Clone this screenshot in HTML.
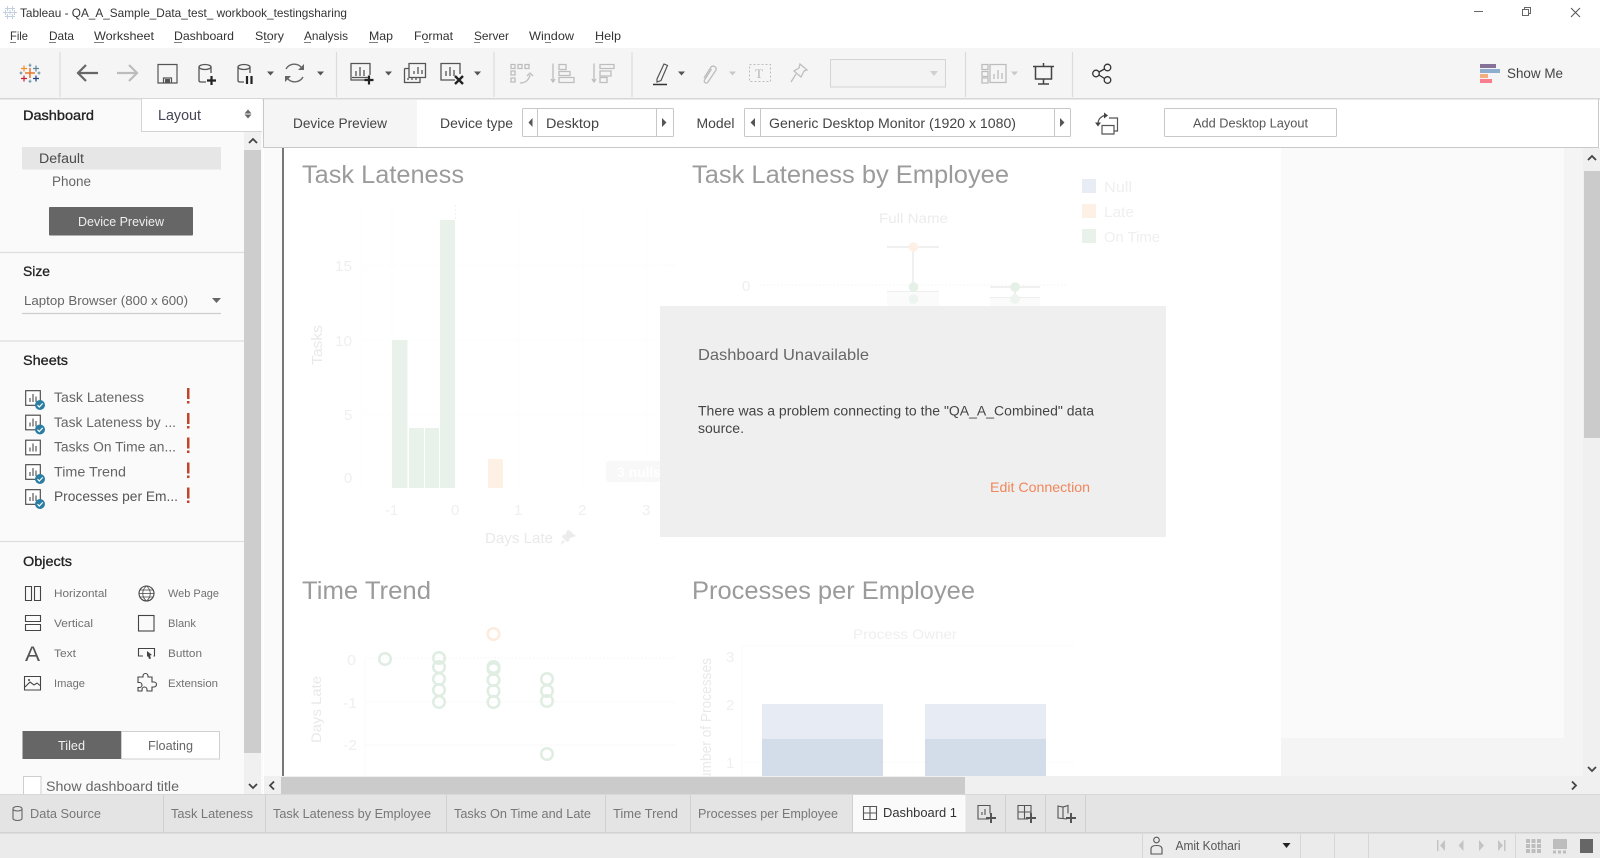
<!DOCTYPE html>
<html lang="en"><head><meta charset="utf-8"><title>Tableau</title>
<style>
html,body{margin:0;padding:0;background:#fff;overflow:hidden}
svg{display:block}
text{font-family:"Liberation Sans",sans-serif;white-space:pre}
.m{font-size:12px;fill:#333}
.p{font-size:13.5px;fill:#555}
.h{font-size:14px;fill:#222}
.o{font-size:11px;fill:#707070}
.t{font-size:12.5px;fill:#777}
.d{font-size:25px;fill:#9b9b9b}
.a{font-size:15px;fill:#efefef}
.l{font-size:15px;fill:#e9e9e9}
.ic{fill:none;stroke:#555;stroke-width:1.3}
.dis{fill:none;stroke:#bdbdbd;stroke-width:1.3}
</style></head><body>
<svg width="1600" height="858" viewBox="0 0 1600 858" xmlns="http://www.w3.org/2000/svg">
<defs>
<symbol id="sheet" viewBox="0 0 16 16" width="16" height="16"><path d="M.7.7h14.6v14.6H.7z" fill="#fff" stroke="#444" stroke-width="1.1"/><path d="M5 12V8M8 12V4M11 12V6.5" stroke="#666" stroke-width="1.3" fill="none"/></symbol>
<symbol id="check" viewBox="0 0 10 10" width="10" height="10"><circle cx="5" cy="5" r="5" fill="#2b7ea3"/><path d="M2.5 5.2l1.8 1.8 3.4-3.6" stroke="#fff" stroke-width="1.2" fill="none"/></symbol>
<symbol id="cross" viewBox="0 0 6 6" width="5" height="5"><path d="M3 0v6M0 3h6" stroke="currentColor" stroke-width="1.2"/></symbol>
</defs>

<!-- base -->
<rect width="1600" height="858" fill="#fff"/>

<!-- title bar -->
<g color="#c3cfdd"><use href="#cross" x="5" y="6"/><use href="#cross" x="10" y="6"/><use href="#cross" x="3" y="10"/><use href="#cross" x="7.500" y="10"/><use href="#cross" x="12" y="10"/><use href="#cross" x="5" y="14"/><use href="#cross" x="10" y="14"/></g>
<text x="20" y="17" class="m" textLength="327" lengthAdjust="spacingAndGlyphs">Tableau - QA_A_Sample_Data_test_ workbook_testingsharing</text>
<path d="M1474 11.5h9" stroke="#666"/><path d="M1522.5 9.5h6v6h-6zM1524.5 9.5v-2h6v6h-2" fill="none" stroke="#666"/><path d="M1571 8l9 9M1580 8l-9 9" stroke="#555"/>

<!-- menu -->
<g class="m">
<text x="10" y="40" class="m" textLength="18" lengthAdjust="spacingAndGlyphs">File</text>
<text x="49" y="40" class="m" textLength="25" lengthAdjust="spacingAndGlyphs">Data</text>
<text x="94" y="40" class="m" textLength="60" lengthAdjust="spacingAndGlyphs">Worksheet</text>
<text x="174" y="40" class="m" textLength="60" lengthAdjust="spacingAndGlyphs">Dashboard</text>
<text x="255" y="40" class="m" textLength="29" lengthAdjust="spacingAndGlyphs">Story</text>
<text x="304" y="40" class="m" textLength="44" lengthAdjust="spacingAndGlyphs">Analysis</text>
<text x="369" y="40" class="m" textLength="24" lengthAdjust="spacingAndGlyphs">Map</text>
<text x="414" y="40" class="m" textLength="39" lengthAdjust="spacingAndGlyphs">Format</text>
<text x="474" y="40" class="m" textLength="35" lengthAdjust="spacingAndGlyphs">Server</text>
<text x="529" y="40" class="m" textLength="45" lengthAdjust="spacingAndGlyphs">Window</text>
<text x="595" y="40" class="m" textLength="26" lengthAdjust="spacingAndGlyphs">Help</text>
</g>
<path d="M10 42.5h6M49 42.5h7M94 42.5h10M174 42.5h8M264 42.5h6M304 42.5h7M369 42.5h9M424 42.5h5M474 42.5h6M545 42.5h6M595 42.5h8" stroke="#555" stroke-width=".8"/>

<!-- toolbar -->
<rect y="48" width="1600" height="50" fill="#f5f5f5"/>
<rect y="98" width="1600" height="1.5" fill="#d6d6d6"/>
<path d="M60 52v45M336.500 52v45M494 52v45M632 52v45M965.500 52v45M1072.500 52v45" stroke="#dcdcdc" stroke-width="1.2"/>
<!-- logo -->
<g>
<path d="M30 68v10M25 73h10" stroke="#e8762b" stroke-width="1.500"/>
<path d="M24 65.500v6M21 68.500h6" stroke="#f28e2b" stroke-width="1.200"/>
<path d="M36 65.500v6M33 68.500h6" stroke="#5b879b" stroke-width="1.200"/>
<path d="M24 75.500v6M21 78.500h6" stroke="#c72035" stroke-width="1.200"/>
<path d="M36 75.500v6M33 78.500h6" stroke="#1f447e" stroke-width="1.200"/>
<path d="M30 63.500v3.500M28.500 65.200h3M30 79.500v3.500M28.500 81.200h3M21 71.500v3M19.500 73h3M39 71.500v3M37.500 73h3" stroke="#5b879b" stroke-width=".9"/>
</g>
<!-- back/forward -->
<path d="M98 73H78M86 65l-8 8 8 8" fill="none" stroke="#666" stroke-width="2.2"/>
<path d="M117 73h20M129 65l8 8-8 8" fill="none" stroke="#bcbcbc" stroke-width="2.2"/>
<!-- save -->
<path d="M158 64.500h19v18.500h-19zM163.500 83v-5h8v5" fill="none" stroke="#555" stroke-width="1.2"/>
<path d="M165 79h5v4h-5z" fill="#555"/>
<!-- data add -->
<ellipse cx="205" cy="67" rx="6" ry="2.500" class="ic"/><path d="M199 67v13.500q0 1.500 2 1.500h5M211 67v6" class="ic"/>
<path d="M211.500 76v9M207 80.500h9" stroke="#222" stroke-width="2.200"/>
<!-- data pause -->
<ellipse cx="244" cy="67" rx="6" ry="2.500" class="ic"/><path d="M238 67v13.500q0 1.500 2 1.500h4M250 67v6" class="ic"/>
<path d="M247 76v8M251.500 76v8" stroke="#222" stroke-width="2.200"/>
<path d="M267 71.500h7l-3.500 4z" fill="#555"/>
<!-- refresh -->
<path d="M286 69a9.500 9.500 0 0 1 15.500-1.500M303 77a9.500 9.500 0 0 1-15.500 1.500" fill="none" stroke="#666" stroke-width="1.400"/>
<path d="M304 64v6h-6zM285 82v-6h6z" fill="#666"/>
<path d="M317 71.500h7l-3.500 4z" fill="#555"/>
<!-- new sheet -->
<path d="M367 80h-16V63.500h19V75" class="ic"/><path d="M356 76v-5M360 76v-9M364 76v-6" class="ic"/><path d="M352 77.500h16" class="ic"/>
<path d="M369 75.500v9M364.500 80h9" stroke="#222" stroke-width="2.200"/>
<path d="M385 71.500h7l-3.500 4z" fill="#555"/>
<!-- duplicate -->
<path d="M409 63.500h16.500v14H409zM404.500 68.500h4.500M404.500 68.500v14h15.500v-5" class="ic"/><path d="M414 74v-3M418 74v-7M422 74v-4M408 80v-2M412 80v-2M416 80v-2" class="ic"/>
<!-- clear -->
<path d="M455 80h-14V63.500h19V74" class="ic"/><path d="M446 76v-5M450 76v-9M454 76v-6" class="ic"/>
<path d="M455 76l8 8M463 76l-8 8" stroke="#222" stroke-width="2.400"/>
<path d="M474 71.500h7l-3.500 4z" fill="#555"/>
<!-- disabled swap -->
<path d="M511 64.500h4v4h-4zM518 64.500h4v4h-4zM525 64.500h4v4h-4zM511 71h4v4h-4zM511 78h4v4h-4z" class="dis"/><path d="M520 83q8 0 10-8M533 76l-3-3-3 3" class="dis"/>
<!-- sort -->
<path d="M553 63.500v18M551 79l2 3 2-3M559 64.500h7v5h-7zM559 71.500h11v4h-11zM559 77.500h15v5h-15z" class="dis"/>
<path d="M594 63.500v18M592 79l2 3 2-3M600 64.500h14v4h-14zM600 71h11v5h-11zM600 77.500h7v5h-7z" class="dis"/>
<!-- highlight -->
<path d="M657 79l7-15 3.500 1.500-6.500 15-4 1.500z" fill="none" stroke="#555" stroke-width="1.200"/><path d="M653 84.500h14" stroke="#333" stroke-width="1.500"/>
<path d="M678 71.500h7l-3.500 4z" fill="#555"/>
<!-- clip -->
<path d="M704 78l7-11a3 3 0 0 1 5 3l-8 12a2 2 0 0 1-3.500-2l7-11" fill="none" stroke="#bdbdbd" stroke-width="1.300"/>
<path d="M729 71.500h7l-3.500 4z" fill="#c8c8c8"/>
<!-- T -->
<path d="M749.500 64.500h21v17h-21z" fill="none" stroke="#bdbdbd" stroke-dasharray="2 2"/>
<text x="755" y="78" font-size="13" fill="#b5b5b5" style="font-family:'Liberation Serif',serif">T</text>
<!-- pin -->
<path d="M800 64l7 6-3 1-3 6-7-6 5-3zM796 74l-5 8" class="dis"/>
<!-- dropdown -->
<rect x="830.500" y="59.500" width="115" height="27.500" fill="#f3f3f3" stroke="#d4d4d4"/>
<path d="M930 71h8l-4 5z" fill="#d0d0d0"/>
<!-- fit -->
<path d="M982 64.500h6v5h-6zM982 71.500h6v5h-6zM982 78h6v5h-6zM990 64.500h16v18h-16zM994 79v-5M998 79v-9M1002 79v-6" class="dis"/>
<path d="M1011 71.500h7l-3.500 4z" fill="#c8c8c8"/>
<!-- presentation -->
<path d="M1033 66.500h21M1035.500 67v12h16V67M1043.500 79v5M1038 84h11M1043.500 63v3" fill="none" stroke="#444" stroke-width="1.500"/>
<!-- share -->
<circle cx="1107.500" cy="67.500" r="3.300" class="ic" style="stroke:#333"/><circle cx="1096" cy="73.500" r="3.300" class="ic" style="stroke:#333"/><circle cx="1107.500" cy="80" r="3.300" class="ic" style="stroke:#333"/><path d="M1099 72l5.500-3M1099 75l5.500 3.500" class="ic" style="stroke:#333"/>
<!-- show me -->
<rect x="1480" y="64" width="16" height="4" fill="#857299"/><rect x="1480" y="69" width="20" height="4" fill="#8eaed0"/><rect x="1480" y="74" width="8" height="4" fill="#f4ad7f"/><rect x="1480" y="79" width="12" height="4" fill="#f87e8e"/>
<text x="1507" y="78" font-size="14" fill="#444" textLength="56" lengthAdjust="spacingAndGlyphs">Show Me</text>

<!-- dashboard region -->
<rect x="264" y="148" width="1336" height="630" fill="#fff"/>
<rect x="264" y="148" width="18" height="630" fill="#fafafa"/>
<rect x="282" y="148" width="2" height="630" fill="#777"/>
<rect x="1281" y="148" width="283" height="590" fill="#fafafa"/>
<rect x="1281" y="738" width="283" height="38" fill="#f4f4f4"/>
<rect x="1564" y="148" width="19" height="628" fill="#f4f4f4"/>

<!-- Task Lateness chart -->
<text x="302" y="183" class="d" textLength="162" lengthAdjust="spacingAndGlyphs">Task Lateness</text>
<path d="M362 265H660M362 340H660M362 414H660M362 205V488M392 205V488M518 205V488M583 205V488M646 205V488" stroke="#fcfcfc"/>
<path d="M455.500 205V220" stroke="#f2f2f2" stroke-dasharray="2 2"/>
<rect x="392" y="340" width="15.500" height="148" fill="#e9f2ea"/>
<rect x="409" y="428" width="15" height="60" fill="#e9f2ea"/>
<rect x="425" y="428" width="14" height="60" fill="#e9f2ea"/>
<rect x="440" y="220" width="15" height="268" fill="#e9f2ea"/>
<rect x="488" y="459" width="15" height="29" fill="#fdf1e6"/>
<text x="335" y="271" class="a" textLength="17" lengthAdjust="spacingAndGlyphs">15</text>
<text x="335" y="346" class="a" textLength="17" lengthAdjust="spacingAndGlyphs">10</text>
<text x="344" y="420" class="a">5</text>
<text x="344" y="483" class="a">0</text>
<text x="385" y="515" class="a" textLength="13" lengthAdjust="spacingAndGlyphs">-1</text>
<text x="451" y="515" class="a">0</text>
<text x="514" y="515" class="a">1</text>
<text x="578" y="515" class="a">2</text>
<text x="642" y="515" class="a">3</text>
<text transform="translate(322,365) rotate(-90)" class="l" textLength="40" lengthAdjust="spacingAndGlyphs">Tasks</text>
<text x="485" y="543" class="l" textLength="68" lengthAdjust="spacingAndGlyphs">Days Late</text>
<path d="M569 530l7 6-2.500 1-3.500 1-1 3-2 1-5-5 1-2 3-1 1-3.500zM563 540l-3 5 5-3z" fill="#ececec"/>
<rect x="606" y="461" width="60" height="21" rx="3" fill="#f8f8f8"/>
<text x="617" y="477" font-size="14" font-weight="bold" fill="#fff" textLength="44" lengthAdjust="spacingAndGlyphs">3 nulls</text>

<!-- Employee chart -->
<text x="692" y="183" class="d" textLength="317" lengthAdjust="spacingAndGlyphs">Task Lateness by Employee</text>
<rect x="1082" y="179" width="14" height="14" fill="#e8ecf4"/><rect x="1082" y="204" width="14" height="14" fill="#fdf1e6"/><rect x="1082" y="229" width="14" height="14" fill="#e9f2ea"/>
<text x="1104" y="192" class="a" textLength="28" lengthAdjust="spacingAndGlyphs">Null</text>
<text x="1104" y="217" class="a" textLength="30" lengthAdjust="spacingAndGlyphs">Late</text>
<text x="1104" y="242" class="a" textLength="56" lengthAdjust="spacingAndGlyphs">On Time</text>
<text x="879" y="223" font-size="14" fill="#ececec" textLength="69" lengthAdjust="spacingAndGlyphs">Full Name</text>
<text x="742" y="291" class="a">0</text>
<path d="M660 265h16" stroke="#fbfbfb"/>
<path d="M760 285H1066" stroke="#f3f3f3" stroke-dasharray="1.500 2"/>
<path d="M887 247h52M913 247v45M990 287h50M1015 287v13" stroke="#eeeeee" stroke-width="1.800"/>
<path d="M887 291.500h52M990 297.500h50" stroke="#eeeeee"/>
<rect x="887" y="292" width="52" height="14" fill="#fbfbfb"/><rect x="990" y="298" width="50" height="8" fill="#fbfbfb"/>
<circle cx="913.500" cy="247" r="4.800" fill="#fdf1e6"/><circle cx="913.500" cy="287" r="4.800" fill="#e5f0e6"/><circle cx="913.500" cy="299" r="4.800" fill="#eef4ef"/><circle cx="1015" cy="287" r="4.800" fill="#e5f0e6"/><circle cx="1015" cy="299" r="4.800" fill="#eef4ef"/>

<!-- Dialog -->
<rect x="660" y="306" width="506" height="231" fill="#efefef"/>
<text x="698" y="360" font-size="16" fill="#666" textLength="171" lengthAdjust="spacingAndGlyphs">Dashboard Unavailable</text>
<text x="698" y="415.500" font-size="13.500" fill="#444" textLength="396" lengthAdjust="spacingAndGlyphs">There was a problem connecting to the "QA_A_Combined" data</text>
<text x="698" y="433" font-size="13.500" fill="#444" textLength="46" lengthAdjust="spacingAndGlyphs">source.</text>
<text x="990" y="492" font-size="14" fill="#f0865c" textLength="100" lengthAdjust="spacingAndGlyphs">Edit Connection</text>

<!-- Time Trend -->
<text x="302" y="599" class="d" textLength="129" lengthAdjust="spacingAndGlyphs">Time Trend</text>
<path d="M365 702H675M365 745H675M365 660V776" stroke="#fafafa"/>
<path d="M365 658H675" stroke="#f3f3f3" stroke-dasharray="1.500 2"/>
<text x="347" y="665" class="a" textLength="9" lengthAdjust="spacingAndGlyphs">0</text>
<text x="343" y="708" class="a" textLength="14" lengthAdjust="spacingAndGlyphs">-1</text>
<text x="343" y="750" class="a" textLength="14" lengthAdjust="spacingAndGlyphs">-2</text>
<text transform="translate(321,743) rotate(-90)" font-size="14" fill="#e9e9e9" textLength="67" lengthAdjust="spacingAndGlyphs">Days Late</text>
<g fill="none" stroke="#e0ede2" stroke-width="2.500">
<circle cx="385" cy="659" r="5.800"/>
<circle cx="439" cy="658" r="5.800"/><circle cx="439" cy="667" r="5.800"/><circle cx="439" cy="679" r="5.800"/><circle cx="439" cy="690" r="5.800"/><circle cx="439" cy="702" r="5.800"/>
<circle cx="493.500" cy="667" r="5.800"/><circle cx="493.500" cy="669" r="5.800"/><circle cx="493.500" cy="680" r="5.800"/><circle cx="493.500" cy="691" r="5.800"/><circle cx="493.500" cy="702" r="5.800"/>
<circle cx="547" cy="679" r="5.800"/><circle cx="547" cy="691" r="5.800"/><circle cx="547" cy="701" r="5.800"/><circle cx="547" cy="754" r="5.800"/>
</g>
<circle cx="493.500" cy="634" r="5.800" fill="none" stroke="#fdebdd" stroke-width="2.500"/>

<!-- Processes -->
<text x="692" y="599" class="d" textLength="283" lengthAdjust="spacingAndGlyphs">Processes per Employee</text>
<text x="853" y="639" font-size="14" fill="#efefef" textLength="104" lengthAdjust="spacingAndGlyphs">Process Owner</text>
<path d="M742 646H1075M742 762H1075M742 646V776" stroke="#fbfbfb"/>
<text x="726" y="662" class="a">3</text><text x="726" y="710" class="a">2</text><text x="726" y="768" class="a">1</text>
<text transform="translate(711,790) rotate(-90)" font-size="15" fill="#e9e9e9" textLength="132" lengthAdjust="spacingAndGlyphs">Number of Processes</text>
<rect x="762" y="704" width="121" height="35" fill="#e7ecf4"/><rect x="762" y="739" width="121" height="38" fill="#d3dde9"/>
<rect x="925" y="704" width="121" height="35" fill="#e7ecf4"/><rect x="925" y="739" width="121" height="38" fill="#d3dde9"/>

<!-- right scrollbar -->
<rect x="1583" y="148" width="17" height="628" fill="#f0f0f0"/>
<rect x="1584" y="171" width="16" height="267" fill="#cbcbcb"/>
<path d="M1588 160l4-4 4 4M1588 767l4 4 4-4" fill="none" stroke="#444" stroke-width="1.800"/>
<!-- h scrollbar -->
<rect x="264" y="776" width="1336" height="18" fill="#f0f0f0"/>
<rect x="281" y="777" width="684" height="17" fill="#cbcbcb"/>
<path d="M274 781.500l-4 4 4 4M1572 781.500l4 4-4 4" fill="none" stroke="#444" stroke-width="1.800"/>

<!-- device preview bar -->
<rect x="263" y="99.500" width="1335.500" height="48" fill="#fff"/>
<path d="M263 147.500H1599M1598.500 99V148M263.500 99V148" stroke="#c9c9c9" fill="none"/>
<rect x="264" y="100" width="153" height="47" fill="#f5f5f5"/>
<text x="293" y="128" class="h" style="fill:#444" textLength="94" lengthAdjust="spacingAndGlyphs">Device Preview</text>
<text x="440" y="128" class="h" style="fill:#444" textLength="73" lengthAdjust="spacingAndGlyphs">Device type</text>
<rect x="522.500" y="108.500" width="151" height="28" rx="1" fill="#fff" stroke="#c8c8c8"/>
<path d="M537.500 108.500v28M656.500 108.500v28" stroke="#c8c8c8"/>
<path d="M532.500 118v9l-4-4.500zM662 118v9l4.500-4.500z" fill="#555"/>
<text x="546" y="128" class="h" style="fill:#444" textLength="53" lengthAdjust="spacingAndGlyphs">Desktop</text>
<text x="696.500" y="128" class="h" style="fill:#444" textLength="38" lengthAdjust="spacingAndGlyphs">Model</text>
<rect x="744.500" y="108.500" width="326" height="28" rx="1" fill="#fff" stroke="#c8c8c8"/>
<path d="M760.500 108.500v28M1054.500 108.500v28" stroke="#c8c8c8"/>
<path d="M755 118v9l-4.500-4.500zM1060 118v9l4.500-4.500z" fill="#555"/>
<text x="769" y="128" class="h" style="fill:#444" textLength="247" lengthAdjust="spacingAndGlyphs">Generic Desktop Monitor (1920 x 1080)</text>
<!-- rotate icon -->
<path d="M1102 125.500h12v8.500h-12zM1109 118h8.500v13h-3.500M1098 124q0-7 8-9" fill="none" stroke="#555" stroke-width="1.200"/>
<path d="M1095 122.500h6l-3 4zM1104 112.500l4 3-4 3z" fill="#444"/>
<rect x="1164.500" y="108.500" width="172" height="28" rx="1" fill="#fff" stroke="#c8c8c8"/>
<text x="1193" y="127.500" font-size="13" fill="#555" textLength="115" lengthAdjust="spacingAndGlyphs">Add Desktop Layout</text>

<!-- left panel -->
<rect x="0" y="99.500" width="263" height="695" fill="#fafafa"/>
<rect x="141" y="99" width="121" height="32.500" fill="#fff"/>
<path d="M141.500 99v32.500H262" stroke="#d4d4d4" fill="none"/>
<text x="23" y="120" font-size="14" fill="#222" stroke="#222" stroke-width=".35" textLength="71" lengthAdjust="spacingAndGlyphs">Dashboard</text>
<text x="158" y="120" font-size="14.500" fill="#445" textLength="43" lengthAdjust="spacingAndGlyphs">Layout</text>
<path d="M248 109.500l-3.500 4h7zM248 118.500l-3.500-4h7z" fill="#666"/>
<!-- left scrollbar -->
<rect x="244" y="132" width="17" height="662" fill="#f0f0f0"/>
<rect x="244" y="150" width="17" height="603" fill="#cdcdcd"/>
<path d="M249 143l4-4 4 4M249 784l4 4 4-4" fill="none" stroke="#444" stroke-width="1.800"/>

<rect x="22" y="147" width="199" height="22.500" fill="#e6e6e6"/>
<text x="39" y="163" class="p" style="fill:#4a4a4a" textLength="45" lengthAdjust="spacingAndGlyphs">Default</text>
<text x="52" y="186" class="p" style="fill:#666" textLength="39" lengthAdjust="spacingAndGlyphs">Phone</text>
<rect x="49" y="207" width="144" height="28.500" rx="1" fill="#666"/>
<text x="78" y="226" font-size="12.500" fill="#efefef" textLength="86" lengthAdjust="spacingAndGlyphs">Device Preview</text>
<path d="M0 252.500h244M0 341h244M0 541.500h244" stroke="#dedede" stroke-width="1.200"/>
<text x="23" y="276" font-size="14" fill="#222" stroke="#222" stroke-width=".3" textLength="27" lengthAdjust="spacingAndGlyphs">Size</text>
<text x="24" y="305" class="t" style="fill:#666" textLength="164" lengthAdjust="spacingAndGlyphs">Laptop Browser (800 x 600)</text>
<path d="M212 298h9l-4.500 5z" fill="#666"/>
<path d="M22 313.500h199" stroke="#cfcfcf" stroke-width="1.200"/>
<text x="23" y="365" font-size="14" fill="#222" stroke="#222" stroke-width=".3" textLength="45" lengthAdjust="spacingAndGlyphs">Sheets</text>
<use href="#sheet" x="25" y="390"/><use href="#check" x="35" y="400"/>
<use href="#sheet" x="25" y="414.500"/><use href="#check" x="35" y="424.500"/>
<use href="#sheet" x="25" y="439.500"/>
<use href="#sheet" x="25" y="464"/><use href="#check" x="35" y="474"/>
<use href="#sheet" x="25" y="489"/><use href="#check" x="35" y="499"/>
<text x="54" y="402" class="p" style="fill:#666" textLength="90" lengthAdjust="spacingAndGlyphs">Task Lateness</text>
<text x="54" y="427" class="p" style="fill:#666" textLength="122" lengthAdjust="spacingAndGlyphs">Task Lateness by ...</text>
<text x="54" y="451.500" class="p" style="fill:#666" textLength="122" lengthAdjust="spacingAndGlyphs">Tasks On Time an...</text>
<text x="54" y="476.500" class="p" style="fill:#666" textLength="72" lengthAdjust="spacingAndGlyphs">Time Trend</text>
<text x="54" y="501" class="p" style="fill:#555" textLength="124" lengthAdjust="spacingAndGlyphs">Processes per Em...</text>
<g fill="#c4442a"><rect x="187" y="388" width="2.500" height="11"/><rect x="187" y="401" width="2.500" height="2.500"/><rect x="187" y="413" width="2.500" height="11"/><rect x="187" y="426" width="2.500" height="2.500"/><rect x="187" y="437.500" width="2.500" height="11"/><rect x="187" y="450.500" width="2.500" height="2.500"/><rect x="187" y="462.500" width="2.500" height="11"/><rect x="187" y="475.500" width="2.500" height="2.500"/><rect x="187" y="487.500" width="2.500" height="11"/><rect x="187" y="500.500" width="2.500" height="2.500"/></g>

<text x="23" y="566" font-size="14" fill="#222" stroke="#222" stroke-width=".3" textLength="49" lengthAdjust="spacingAndGlyphs">Objects</text>
<!-- object icons -->
<path d="M25.500 586.500h6v14h-6zM34.500 586.500h6v14h-6zM25.500 615.500h15v6h-15zM25.500 624.500h15v6h-15z" fill="none" stroke="#444" stroke-width="1.100"/>
<text x="25" y="661" font-size="21" fill="#555" textLength="15" lengthAdjust="spacingAndGlyphs">A</text>
<path d="M24.500 676.500h16v13.500h-16zM25 687l5-5 4 3 3-2 3 2.500" fill="none" stroke="#444" stroke-width="1.100"/><circle cx="29" cy="680" r="1" fill="#444"/>
<circle cx="146.500" cy="593.500" r="7.500" fill="none" stroke="#444" stroke-width="1.100"/><path d="M139 593.500h15M146.500 586c-5 4-5 11 0 15M146.500 586c5 4 5 11 0 15M140 590h13M140 597h13" fill="none" stroke="#444" stroke-width=".8"/>
<rect x="138.500" y="615.500" width="15.500" height="15.500" fill="none" stroke="#444" stroke-width="1.100"/>
<path d="M143 656h-4.500v-7.500h16V656h-1" fill="none" stroke="#444" stroke-width="1.100"/><path d="M147 651l5 4-2 .5 1 3-2 .5-1-3-1 1z" fill="#444"/>
<path d="M143 677v-1a2.500 2.500 0 0 1 5 0v1h4v5h2a2.500 2.500 0 0 1 0 5h-2v4h-5v-1.500a2.500 2.500 0 0 0-5 0V691h-4v-3.500h1.500a2.500 2.500 0 0 0 0-5H138v-5.500z" fill="none" stroke="#444" stroke-width="1.100"/>
<text x="54" y="597" class="o" textLength="53" lengthAdjust="spacingAndGlyphs">Horizontal</text>
<text x="54" y="627" class="o" textLength="39" lengthAdjust="spacingAndGlyphs">Vertical</text>
<text x="54" y="657" class="o" textLength="22" lengthAdjust="spacingAndGlyphs">Text</text>
<text x="54" y="687" class="o" textLength="31" lengthAdjust="spacingAndGlyphs">Image</text>
<text x="168" y="597" class="o" textLength="51" lengthAdjust="spacingAndGlyphs">Web Page</text>
<text x="168" y="627" class="o" textLength="28" lengthAdjust="spacingAndGlyphs">Blank</text>
<text x="168" y="657" class="o" textLength="34" lengthAdjust="spacingAndGlyphs">Button</text>
<text x="168" y="687" class="o" textLength="50" lengthAdjust="spacingAndGlyphs">Extension</text>
<rect x="22.500" y="731" width="99" height="28" fill="#666"/>
<rect x="121.500" y="731.500" width="98" height="27.500" fill="#fff" stroke="#d0d0d0"/>
<text x="58" y="750" font-size="13" fill="#f0f0f0" textLength="27" lengthAdjust="spacingAndGlyphs">Tiled</text>
<text x="148" y="750" font-size="13" fill="#666" textLength="45" lengthAdjust="spacingAndGlyphs">Floating</text>
<rect x="23.500" y="776.500" width="17.500" height="18" fill="#fff" stroke="#cfcfcf"/>
<text x="46" y="791" class="p" style="fill:#666" textLength="133" lengthAdjust="spacingAndGlyphs">Show dashboard title</text>

<!-- tab bar -->
<rect y="794" width="1600" height="38" fill="#e4e4e4"/>
<rect y="794" width="1600" height="1" fill="#d8d8d8"/>
<rect y="832" width="1600" height="1.500" fill="#d2d2d2"/>
<rect y="833.500" width="1600" height="24.500" fill="#ebebeb"/>
<path d="M163.500 795v37M265.500 795v37M446.500 795v37M605.500 795v37M690.500 795v37M852.500 795v37M1005.500 795v37M1045.500 795v37M1085.500 795v37" stroke="#d0d0d0"/>
<rect x="853" y="795" width="112.500" height="37" fill="#fafafa"/>
<path d="M13 808.500a4.500 2 0 0 1 9 0v10a4.500 2 0 0 1-9 0zM13 809a4.500 2 0 0 0 9 0" fill="none" stroke="#666" stroke-width="1.100"/>
<text x="30" y="818" class="t" textLength="71" lengthAdjust="spacingAndGlyphs">Data Source</text>
<text x="171" y="818" class="t" textLength="82" lengthAdjust="spacingAndGlyphs">Task Lateness</text>
<text x="273" y="818" class="t" textLength="158" lengthAdjust="spacingAndGlyphs">Task Lateness by Employee</text>
<text x="454" y="818" class="t" textLength="137" lengthAdjust="spacingAndGlyphs">Tasks On Time and Late</text>
<text x="613" y="818" class="t" textLength="65" lengthAdjust="spacingAndGlyphs">Time Trend</text>
<text x="698" y="818" class="t" textLength="140" lengthAdjust="spacingAndGlyphs">Processes per Employee</text>
<path d="M863.500 806.500h13v13h-13zM870 806.500v13M863.500 813h13" fill="none" stroke="#555" stroke-width="1.100"/>
<text x="883" y="817" font-size="13" fill="#333" textLength="74" lengthAdjust="spacingAndGlyphs">Dashboard 1</text>
<!-- new sheet tabs -->
<path d="M989 819h-11v-13.500h12v8M982 815v-3M985 815v-6" fill="none" stroke="#555" stroke-width="1.100"/><path d="M991 813v10M986 818h10" stroke="#555" stroke-width="2"/>
<path d="M1028 819h-10v-13.500h13v8M1024.500 805.500v13.500M1018 812h13" fill="none" stroke="#555" stroke-width="1.100"/><path d="M1031 813v10M1026 818h10" stroke="#555" stroke-width="2"/>
<path d="M1067 819l-9-1v-12l5 1 5-1.500v8M1063 807v12" fill="none" stroke="#555" stroke-width="1.100"/><path d="M1071 813v10M1066 818h10" stroke="#555" stroke-width="2"/>

<!-- status bar -->
<path d="M1142.500 834v24M1300.500 834v24M1334.500 834v24M1368.500 834v24M1515.500 834v24" stroke="#d6d6d6"/>
<circle cx="1156.500" cy="840" r="2.800" fill="none" stroke="#555" stroke-width="1.100"/><path d="M1151 854v-5q0-3.500 5.500-3.500t5.500 3.500v5z" fill="none" stroke="#555" stroke-width="1.100"/>
<text x="1175.500" y="850" font-size="12.500" fill="#555" textLength="65" lengthAdjust="spacingAndGlyphs">Amit Kothari</text>
<path d="M1282.500 843h8l-4 5z" fill="#222"/>
<g fill="#c4c4c4"><path d="M1437 840h1.500v11H1437zM1445 840v11l-5-5.500zM1463.500 840v11l-5-5.500zM1479 840v11l5-5.500zM1498 840v11l5-5.500zM1504 840h1.500v11H1504z"/></g>
<g fill="#bdbdbd"><path d="M1526 839h4v4h-4zM1531.500 839h4v4h-4zM1537 839h4v4h-4zM1526 844h4v4h-4zM1531.500 844h4v4h-4zM1537 844h4v4h-4zM1526 849h4v4h-4zM1531.500 849h4v4h-4zM1537 849h4v4h-4z"/>
<rect x="1553" y="839" width="14" height="10"/><path d="M1553 850.500h3v3h-3zM1558 850.500h3v3h-3zM1563 850.500h3v3h-3z"/></g>
<rect x="1580" y="839" width="13" height="14" fill="#666"/>
</svg>
</body></html>
